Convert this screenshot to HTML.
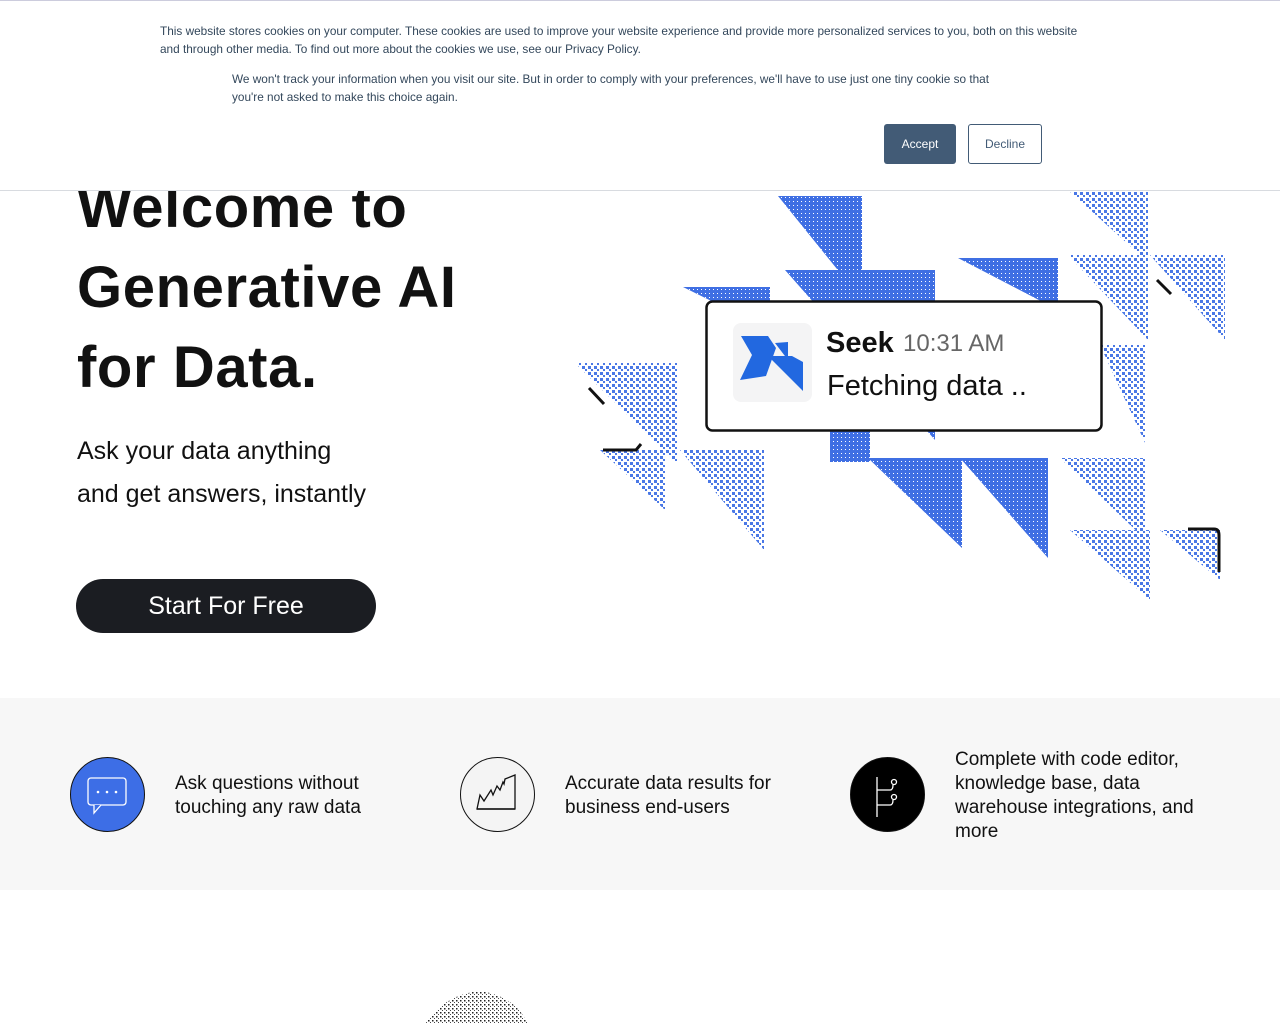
<!DOCTYPE html>
<html><head><style>
body{margin:0;width:1280px;height:1024px;overflow:hidden;background:#fff;font-family:"Liberation Sans",sans-serif;position:relative}
.cookie{position:absolute;left:0;top:0;width:1280px;height:189px;background:#fff;border-top:1px solid #ccd;border-bottom:1px solid #d8dbe0;z-index:5}
.cookie p{position:absolute;margin:0;font-size:11.8px;line-height:18px;color:#33475b}
.btn{position:absolute;top:123px;height:38px;font-size:12px;display:flex;align-items:center;justify-content:center;border-radius:3px}
h1{position:absolute;left:77px;top:168px;margin:0;font-size:58px;line-height:80px;font-weight:700;color:#111;letter-spacing:0.6px;font-family:"Liberation Sans",sans-serif}
.sub{position:absolute;left:77px;top:430px;font-size:25px;line-height:43px;color:#111}
.start{position:absolute;left:76px;top:579px;width:300px;height:54px;background:#1b1d22;border-radius:27px;color:#fff;font-size:25px;display:flex;align-items:center;justify-content:center}
.band{position:absolute;left:0;top:698px;width:1280px;height:192px;background:#f7f7f7}
.f{position:absolute;font-size:19px;line-height:24px;color:#111}
.ic{position:absolute;top:757px;width:75px;height:75px;border-radius:50%;border:1.5px solid #111;box-sizing:border-box}
</style></head><body>
<div class="cookie">
<p style="left:160px;top:21px;width:935px">This website stores cookies on your computer. These cookies are used to improve your website experience and provide more personalized services to you, both on this website and through other media. To find out more about the cookies we use, see our Privacy Policy.</p>
<p style="left:232px;top:69px;width:785px">We won't track your information when you visit our site. But in order to comply with your preferences, we'll have to use just one tiny cookie so that you're not asked to make this choice again.</p>
<div class="btn" style="left:884px;width:72px;background:#425b76;color:#fff;height:40px">Accept</div>
<div class="btn" style="left:968px;width:74px;border:1px solid #425b76;color:#425b76;box-sizing:border-box;height:40px">Decline</div>
</div>
<h1>Welcome to<br>Generative AI<br>for Data.</h1>
<div class="sub">Ask your data anything<br>and get answers, instantly</div>
<div class="start">Start For Free</div>
<svg style="position:absolute;left:0;top:0" width="1280" height="700">
<defs><pattern id="d" width="6" height="6" patternUnits="userSpaceOnUse"><rect width="6" height="6" fill="#fff"/><rect x="0" y="0" width="3" height="3" fill="#4a78e6"/><rect x="3" y="3" width="2" height="2" fill="#4a78e6"/></pattern>
<pattern id="s" width="4" height="4" patternUnits="userSpaceOnUse"><rect width="4" height="4" fill="#3f6fe3"/><rect x="1" y="1" width="1" height="1" fill="#fff"/></pattern></defs>
<g fill="url(#s)">
<polygon points="778,196 862,196 862,300"/>
<polygon points="785,270 935,270 935,440"/>
<polygon points="958,258 1058,258 1058,310"/>
<polygon points="683,287 770,287 770,330"/>
<polygon points="868,458 962,458 962,548"/>
<polygon points="960,458 1048,458 1048,558"/>
<rect x="830" y="428" width="40" height="34"/>
</g>
<g fill="url(#d)">
<polygon points="1068,190 1148,190 1148,262"/>
<polygon points="1068,255 1148,255 1148,340"/>
<polygon points="1150,255 1225,255 1225,340"/>
<polygon points="1100,345 1146,345 1146,445"/>
<polygon points="575,363 678,363 678,465"/>
<polygon points="600,450 665,450 665,510"/>
<polygon points="680,450 764,450 764,550"/>
<polygon points="1060,458 1146,458 1146,540"/>
<polygon points="1070,530 1150,530 1150,600"/>
<polygon points="1160,530 1220,530 1220,580"/>
</g>
<g stroke="#111" stroke-width="3" fill="none"><path d="M589,388 L604,404"/><path d="M603,450 L636,450 L641,444"/><path d="M1157,280 L1171,294"/><path d="M1188,529 L1214,529 Q1219,529 1219,535 L1219,572"/></g>
<rect x="706.5" y="301.5" width="395" height="129" rx="6" fill="#fff" stroke="#111" stroke-width="2.5"/>
<rect x="733" y="323" width="79" height="79" rx="8" fill="#f4f4f5"/>
<polygon points="741,336 768,336 776,348 766,376 740,380 752,355" fill="#2268e0"/>
<polygon points="775,343 788,342 788,360" fill="#2268e0"/>
<polygon points="768,356 792,356 803,362 803,391" fill="#2268e0"/>
<text x="826" y="352" font-family="Liberation Sans" font-weight="700" font-size="29" fill="#111">Seek</text>
<text x="903" y="351" font-family="Liberation Sans" font-size="24" fill="#666">10:31 AM</text>
<text x="827" y="395" font-family="Liberation Sans" font-size="29" fill="#111">Fetching data ..</text>
</svg>
<div class="band"></div>
<div class="ic" style="left:70px;background:#3d6ee6"><svg width="75" height="75" style="position:absolute;left:-1px;top:-1px"><rect x="18" y="21" width="38" height="27" rx="3" fill="none" stroke="#fff" stroke-width="1.3"/><path d="M24,48 L24,56 L31,48" fill="#3d6ee6" stroke="#fff" stroke-width="1.3"/><circle cx="28" cy="35" r="1.3" fill="#fff"/><circle cx="37" cy="35" r="1.3" fill="#fff"/><circle cx="46" cy="35" r="1.3" fill="#fff"/></svg></div>
<div class="f" style="left:175px;top:772px">Ask questions without<br>touching any raw data</div>
<div class="ic" style="left:460px;background:#f4f4f4"><svg width="75" height="75" style="position:absolute;left:-1px;top:-1px"><path d="M17,52 L20,38 L24,44 L31,33 L33,38 L37,29 L40,33 L43,25 L44,27 L45,22 L55,18 L55,52 Z" fill="none" stroke="#111" stroke-width="1.3"/><path d="M17,52 L55,52" stroke="#111" stroke-width="1.5"/></svg></div>
<div class="f" style="left:565px;top:772px">Accurate data results for<br>business end-users</div>
<div class="ic" style="left:850px;background:#000"><svg width="75" height="75" style="position:absolute;left:-1px;top:-1px"><g stroke="#fff" stroke-width="1.3" fill="none"><path d="M27,20 L27,60"/><path d="M27,33 L40,33 Q43,33 43,28"/><circle cx="44" cy="25" r="2.5"/><path d="M27,48 L40,48 Q43,48 43,43"/><circle cx="44" cy="40" r="2.5"/></g></svg></div>
<div class="f" style="left:955px;top:748px">Complete with code editor,<br>knowledge base, data<br>warehouse integrations, and<br>more</div>
<svg style="position:absolute;left:420px;top:988px" width="110" height="36"><defs><pattern id="k" width="4" height="4" patternUnits="userSpaceOnUse"><rect x="0" y="0" width="1.5" height="1.5" fill="#222"/><rect x="2" y="2" width="1" height="1" fill="#444"/></pattern></defs><path d="M5,36 Q25,6 60,3 Q95,8 108,36 Z" fill="url(#k)"/></svg>
</body></html>
